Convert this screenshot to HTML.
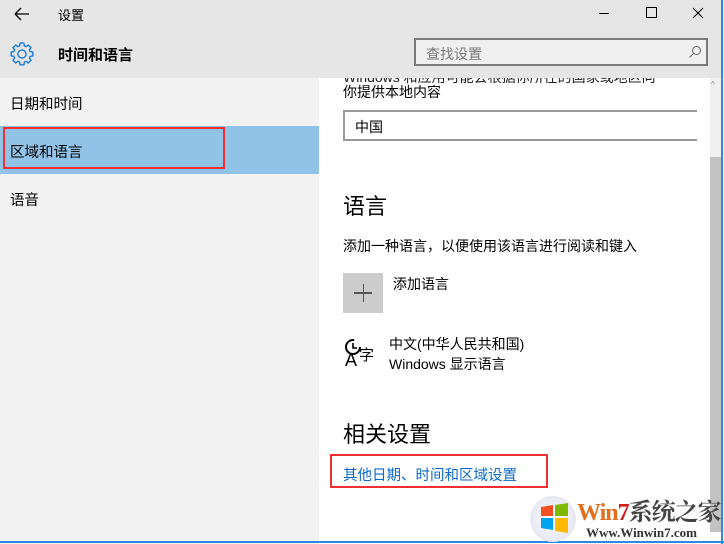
<!DOCTYPE html><html><head><meta charset="utf-8"><style>
body{margin:0;width:724px;height:544px;position:relative;overflow:hidden;font-family:"Liberation Sans","Noto Sans CJK SC",sans-serif;background:#fff}
.a{position:absolute}
</style></head><body>
<div class="a" style="left:343px;top:70px;width:345px;height:16px;overflow:hidden;font-size:14px;line-height:14px;color:#222">Windows 和应用可能会根据你所在的国家或地区向</div>
<div class="a" style="left:0;top:0;width:724px;height:78px;background:#e6e6e6"></div>
<svg class="a" style="left:12px;top:6px" width="20" height="16"><path d="M3 8H17M3 8L9 2M3 8L9 14" stroke="#000" stroke-width="1.3" fill="none"/></svg>
<div class="a" style="left:58px;top:5px;font-size:13px">设置</div>
<div class="a" style="left:599px;top:13px;width:10px;height:1px;background:#000"></div>
<div class="a" style="left:646px;top:7px;width:9px;height:9px;border:1px solid #000"></div>
<svg class="a" style="left:692px;top:7px" width="12" height="12"><path d="M1 1L11 11M11 1L1 11" stroke="#000" stroke-width="1.1"/></svg>
<svg class="a" style="left:8px;top:40px" width="28" height="28" viewBox="0 0 24 24"><path d="M12 2.5l1.6.2.4 2.3 1.5.7 1.9-1.4 2.3 2.3-1.4 1.9.7 1.5 2.3.4v3.2l-2.3.4-.7 1.5 1.4 1.9-2.3 2.3-1.9-1.4-1.5.7-.4 2.3h-3.2l-.4-2.3-1.5-.7-1.9 1.4-2.3-2.3 1.4-1.9-.7-1.5-2.3-.4v-3.2l2.3-.4.7-1.5-1.4-1.9 2.3-2.3 1.9 1.4 1.5-.7.4-2.3z" fill="none" stroke="#1a7ad4" stroke-width="1.2"/><circle cx="12" cy="12" r="3.5" fill="none" stroke="#1a7ad4" stroke-width="1.2"/></svg>
<div class="a" style="left:58px;top:44px;font-size:15px;font-weight:bold">时间和语言</div>
<div class="a" style="left:414px;top:38px;width:294px;height:28px;border:2px solid #7a7a7a;background:#f0f0f0;box-sizing:border-box"></div>
<div class="a" style="left:426px;top:44px;font-size:14px;color:#777">查找设置</div>
<svg class="a" style="left:688px;top:45px" width="14" height="14"><circle cx="8.5" cy="5.5" r="4" fill="none" stroke="#666"/><path d="M5.5 8.5L1.5 12.5" stroke="#666"/></svg>
<div class="a" style="left:0;top:78px;width:319px;height:466px;background:#f2f2f2"></div>
<div class="a" style="left:10px;top:93px;font-size:14.5px">日期和时间</div>
<div class="a" style="left:0;top:126px;width:319px;height:48px;background:#91c3e8"></div>
<div class="a" style="left:3px;top:127px;width:218px;height:38px;border:2px solid #f03030"></div>
<div class="a" style="left:10px;top:141px;font-size:14.5px">区域和语言</div>
<div class="a" style="left:10px;top:189px;font-size:14.5px">语音</div>
<div class="a" style="left:343px;top:82px;font-size:14px">你提供本地内容</div>
<div class="a" style="left:343px;top:110px;width:354px;height:31px;border:2px solid #999;border-right:none;box-sizing:border-box"></div>
<div class="a" style="left:355px;top:117px;font-size:14px">中国</div>
<div class="a" style="left:343px;top:189px;font-size:22px">语言</div>
<div class="a" style="left:343px;top:236px;font-size:14px">添加一种语言，以便使用该语言进行阅读和键入</div>
<div class="a" style="left:343px;top:273px;width:40px;height:40px;background:#cccccc"></div>
<div class="a" style="left:354px;top:292px;width:18px;height:1.5px;background:#555"></div>
<div class="a" style="left:362.5px;top:284px;width:1.5px;height:18px;background:#555"></div>
<div class="a" style="left:393px;top:274px;font-size:14px">添加语言</div>
<svg class="a" style="left:344px;top:337px" width="36" height="36"><circle cx="9" cy="10" r="7" fill="none" stroke="#000" stroke-width="2" stroke-dasharray="34 10"/><path d="M9 6V11H13" stroke="#000" stroke-width="1.6" fill="none"/></svg>
<div class="a" style="left:345px;top:350px;font-size:18px">A</div>
<div class="a" style="left:359px;top:344px;font-size:15px">字</div>
<div class="a" style="left:389px;top:334px;font-size:14px">中文(中华人民共和国)</div>
<div class="a" style="left:389px;top:354px;font-size:14px">Windows 显示语言</div>
<div class="a" style="left:343px;top:417px;font-size:22px">相关设置</div>
<div class="a" style="left:330px;top:454px;width:218px;height:34px;border:2px solid #f03030;box-sizing:border-box"></div>
<div class="a" style="left:343px;top:464px;font-size:14.5px;color:#0b6ac9">其他日期、时间和区域设置</div>
<div class="a" style="left:710px;top:78px;width:11px;height:454px;background:#f0f0f0"></div>
<div class="a" style="left:710px;top:157px;width:11px;height:375px;background:#c2c2c2"></div>
<div class="a" style="left:711px;top:80px;font-size:8px;color:#888">^</div>
<div class="a" style="left:721px;top:0;width:2px;height:544px;background:#2a8ae0"></div>
<div class="a" style="left:0;top:541px;width:724px;height:2px;background:#2a8ae0"></div>
<div class="a" style="left:530px;top:496px;width:46px;height:46px;border-radius:50%;background:radial-gradient(#fff,#dde);"></div>
<svg class="a" style="left:538px;top:503px" width="32" height="30"><path d="M3 4l12-2v11H3z" fill="#f25022"/><path d="M17 2l13-2v13H17z" fill="#7fba00"/><path d="M3 15h12v12L3 25z" fill="#00a4ef"/><path d="M17 15h13v15l-13-2z" fill="#ffb900"/></svg>
<div class="a" style="left:577px;top:492px;font-size:24px;font-weight:bold;font-family:'Liberation Serif','Noto Serif CJK SC',serif;color:#e07020;letter-spacing:-1px">Win<span style="color:#d02020">7</span><span style="color:#444">系统之家</span></div>
<div class="a" style="left:586px;top:525px;font-size:13px;font-weight:bold;font-family:'Liberation Serif',serif;color:#333">Www.Winwin7.com</div>
</body></html>
